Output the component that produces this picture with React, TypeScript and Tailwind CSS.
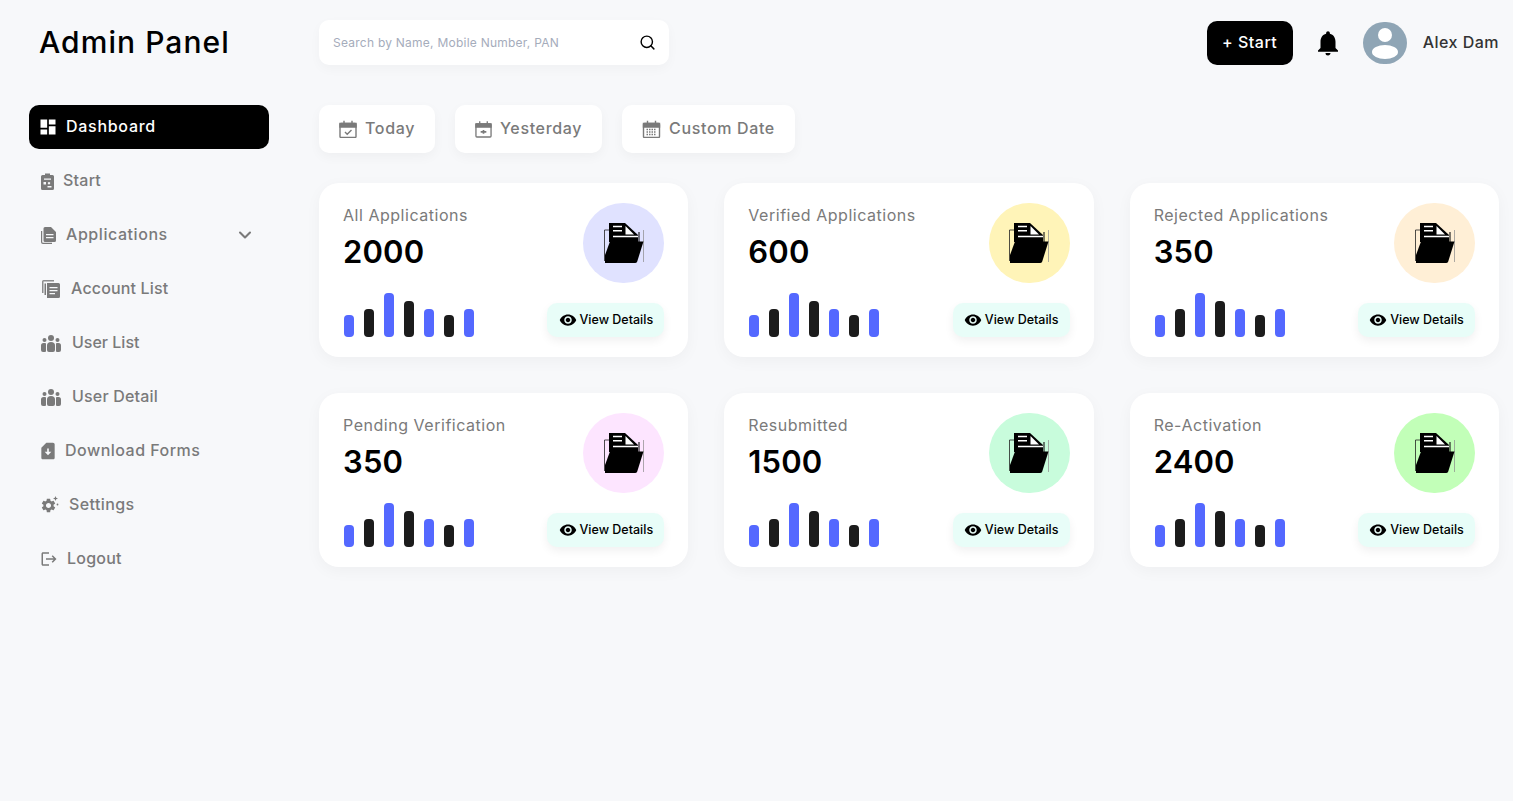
import React from 'react';
import { Search, ChevronDown } from 'lucide-react';
import {
  MdDashboard,
  MdSimCardDownload,
  MdSettings,
  MdLogout,
  MdNotifications,
  MdVisibility,
} from 'react-icons/md';

const font = "font-['Inter','Liberation_Sans',sans-serif]";

const ClipboardIcon = () => (
  <svg width="13" height="18" viewBox="0 0 13 18" fill="#7a7a7a" className="ml-px">
    <path fillRule="evenodd" d="M4 1.500h5V3h2.500A1.500 1.500 0 0 1 13 4.500V16.500A1.500 1.500 0 0 1 11.500 18H1.500A1.500 1.500 0 0 1 0 16.500V4.500A1.500 1.500 0 0 1 1.500 3H4zM3 6.500v1.200h7V6.500zM2.500 10v2.500H5V10zM8 10a1.200 1.200 0 1 0 .01 0zM6.500 14v1.500h4V14z" />
  </svg>
);

const DocIcon = () => (
  <svg width="15" height="17" viewBox="0 0 15 17" fill="#7a7a7a" className="ml-px">
    <path d="M0 4h1.200v11a.8.8 0 0 0 .8.8h9V17H2a2 2 0 0 1-2-2z" />
    <path fillRule="evenodd" d="M4 0h6l5 5v8.500a1.500 1.500 0 0 1-1.500 1.500H4a1.500 1.500 0 0 1-1.500-1.500v-12A1.500 1.500 0 0 1 4 0zM5 7v1.300h7.500V7zM5 10v1.300h7.500V10z" />
  </svg>
);

const ListIcon = () => (
  <svg width="18" height="18" viewBox="0 0 18 18" fill="#7a7a7a" className="ml-[2px]">
    <path d="M0 1.500A1.500 1.500 0 0 1 1.500 0H12v1.500H1.500V13H0z" opacity=".85" />
    <path d="M2.500 3.500H4V15H2.500z" />
    <path fillRule="evenodd" d="M5 3h11.500A1.500 1.500 0 0 1 18 4.500v12a1.500 1.500 0 0 1-1.500 1.500H5zM7.500 7v1.300H15.500V7zM7.500 10v1.300H15.500V10zM7.500 13v1.300H13V13z" />
  </svg>
);

const UsersIcon = () => (
  <svg width="20" height="17" viewBox="0 0 20 17" fill="#7a7a7a" className="ml-px">
    <circle cx="10" cy="3" r="3" />
    <circle cx="3.500" cy="5" r="2" />
    <circle cx="16.500" cy="5" r="2" />
    <path d="M6 10.500a4 3.500 0 0 1 8 0V15a2 2 0 0 1-2 2H8a2 2 0 0 1-2-2z" />
    <path d="M0 10.500A2.500 2.500 0 0 1 2.500 8h1.700Q5 8 5 9v7a1 1 0 0 1-1 1H2a2 2 0 0 1-2-2z" />
    <path d="M20 10.500A2.500 2.500 0 0 0 17.500 8h-1.700Q15 8 15 9v7a1 1 0 0 0 1 1h2a2 2 0 0 0 2-2z" />
  </svg>
);

const SettingsIcon = () => (
  <span className="relative flex h-[18px] w-[19px] items-end">
    <MdSettings size={17} color="#7a7a7a" />
    <svg className="absolute right-0 top-0" width="6" height="12" viewBox="0 0 6 12" fill="#7a7a7a">
      <path d="M2.500 0l.7 1.800L5 2.500l-1.800.7-.7 1.800-.7-1.800L0 2.500l1.800-.7z" />
      <circle cx="4.500" cy="8.500" r=".9" />
    </svg>
  </span>
);

const CalendarFrame = ({ children, width, height }: { children: React.ReactNode; width: number; height: number }) => (
  <svg width={width} height={height} viewBox="0 0 18 18" fill="none" stroke="#7a7a7a" strokeWidth="1.400">
    <path d="M1 4.500a1 1 0 0 1 1-1h14a1 1 0 0 1 1 1v12a1 1 0 0 1-1 1H2a1 1 0 0 1-1-1z" />
    <path d="M1 3.500h16v3.500H1z" fill="#7a7a7a" />
    <path d="M5 .8v3M13 .8v3" />
    {children}
  </svg>
);

const FolderIcon = () => (
  <svg width="40" height="40" viewBox="0 0 40 40">
    {/* back of the folder */}
    <path d="M.5 38V7h5" fill="none" stroke="#222" strokeWidth="0.800" />
    <path d="M35 9v10" stroke="#222" strokeWidth="1.200" />
    <path d="M39.500 7v32" stroke="#8a8a8a" strokeWidth="0.700" />
    {/* sheet */}
    <path d="M5 0h16L34 12v7H5z" fill="#000" />
    <path d="M9 2.700h9v1.500H9zM9 7h9v1.500H9zM9 12.800h25v1.400H9z" fill="#fff" />
    <path d="M21.500 3L30 11.500H21.500z" fill="#fff" />
    {/* front */}
    <path d="M1 40V32L6 18.500H39.500L33.200 38.500Q32.700 40 31 40z" fill="#000" />
  </svg>
);

const navItems: { label: string; icon: React.ReactNode; active?: boolean; chevron?: boolean; iconBox: string; tracking: string }[] = [
  { label: 'Dashboard', icon: <MdDashboard size={20} color="#fff" className="-ml-[2px]" />, active: true, iconBox: 'w-[26px]', tracking: 'tracking-[0.045em]' },
  { label: 'Start', icon: <ClipboardIcon />, iconBox: 'w-[23px]', tracking: 'tracking-[0.015em]' },
  { label: 'Applications', icon: <DocIcon />, chevron: true, iconBox: 'w-[26px]', tracking: 'tracking-[0.035em]' },
  { label: 'Account List', icon: <ListIcon />, iconBox: 'w-[31px]', tracking: 'tracking-[0.01em]' },
  { label: 'User List', icon: <UsersIcon />, iconBox: 'w-[32px]', tracking: 'tracking-normal' },
  { label: 'User Detail', icon: <UsersIcon />, iconBox: 'w-[32px]', tracking: 'tracking-[0.012em]' },
  { label: 'Download Forms', icon: <MdSimCardDownload size={20} color="#7a7a7a" className="-ml-[2px]" />, iconBox: 'w-[25px]', tracking: 'tracking-[0.03em]' },
  { label: 'Settings', icon: <SettingsIcon />, iconBox: 'w-[29px]', tracking: 'tracking-[0.025em]' },
  { label: 'Logout', icon: <MdLogout size={18} color="#7a7a7a" />, iconBox: 'w-[27px]', tracking: 'tracking-[0.015em]' },
];

const cards = [
  { title: 'All Applications', value: '2000', circle: 'bg-[#e0e2ff]' },
  { title: 'Verified Applications', value: '600', circle: 'bg-[#fff4b8]' },
  { title: 'Rejected Applications', value: '350', circle: 'bg-[#ffefd6]' },
  { title: 'Pending Verification', value: '350', circle: 'bg-[#fde5ff]' },
  { title: 'Resubmitted', value: '1500', circle: 'bg-[#c8fcdc]' },
  { title: 'Re-Activation', value: '2400', circle: 'bg-[#c2ffb8]' },
];

const bars = [
  { h: 'h-[22px]', c: 'bg-[#5468ff]' },
  { h: 'h-[28px]', c: 'bg-[#1c1c1c]' },
  { h: 'h-[44px]', c: 'bg-[#5468ff]' },
  { h: 'h-[36px]', c: 'bg-[#1c1c1c]' },
  { h: 'h-[28px]', c: 'bg-[#5468ff]' },
  { h: 'h-[22px]', c: 'bg-[#1c1c1c]' },
  { h: 'h-[28px]', c: 'bg-[#5468ff]' },
];

const dateButtons = [
  {
    label: 'Today',
    width: 'w-[116px]',
    icon: (
      <CalendarFrame width={18} height={18}>
        <path d="M6 12l2.200 2.200L12.500 10" />
      </CalendarFrame>
    ),
  },
  {
    label: 'Yesterday',
    width: 'w-[147px]',
    icon: (
      <CalendarFrame width={17} height={18}>
        <path d="M6 12h6M9 10v4" strokeWidth="1.800" />
      </CalendarFrame>
    ),
  },
  {
    label: 'Custom Date',
    width: 'w-[173px]',
    icon: (
      <CalendarFrame width={19} height={18}>
        <path d="M4 9.500h10M4 12h10M4 14.500h10" strokeDasharray="1.500 1" />
      </CalendarFrame>
    ),
  },
];

const StatCard = ({ title, value, circle }: { title: string; value: string; circle: string }) => (
  <div className="flex h-[174px] flex-col justify-between rounded-[20px] bg-white px-6 pb-5 pt-5 shadow-[0_4px_16px_rgba(0,0,0,0.04)]">
    <div className="flex items-start justify-between">
      <div>
        <p className="mt-[1px] text-base leading-[22px] tracking-[0.033em] text-[#7a7a7a]">{title}</p>
        <p className="mt-[6px] text-[31px] font-semibold leading-[40px] tracking-[0.005em] text-black">{value}</p>
      </div>
      <div className={`flex h-20 w-[81px] items-center justify-center rounded-full ${circle}`}>
        <FolderIcon />
      </div>
    </div>
    <div className="flex items-end justify-between">
      <div className="ml-px flex items-end gap-[10px]">
        {bars.map((bar, i) => (
          <span key={i} className={`w-[10px] rounded-[4px] ${bar.h} ${bar.c}`} />
        ))}
      </div>
      <button className="flex h-[34px] w-[117px] items-center justify-center gap-[3px] rounded-[10px] bg-[#e8fdf8] text-[12.500px] font-medium text-black shadow-[0_4px_10px_rgba(0,0,0,0.06)]">
        <MdVisibility size={18} />
        View Details
      </button>
    </div>
  </div>
);

export default function App() {
  return (
    <div className={`flex min-h-[801px] bg-[#f7f8fa] ${font}`}>
      <aside className="w-[319px] shrink-0 pl-[29px] pr-[50px]">
        <h1 className="ml-[10px] flex h-[85px] items-center text-[30px] font-medium tracking-[0.035em] text-black">Admin Panel</h1>
        <nav className="mt-5 flex flex-col gap-[10px]">
          {navItems.map(item => (
            <div
              key={item.label}
              className={`flex h-11 items-center rounded-[10px] pl-[11px] pr-[14px] ${item.active ? 'bg-black text-white' : 'text-[#7a7a7a]'}`}
            >
              <span className={`flex items-center ${item.iconBox}`}>{item.icon}</span>
              <span className={`pb-[2px] text-base font-medium ${item.tracking}`}>{item.label}</span>
              {item.chevron && <ChevronDown size={20} strokeWidth={2.500} className="ml-auto" />}
            </div>
          ))}
        </nav>
      </aside>

      <main className="min-w-0 flex-1 pr-[14px]">
        <header className="flex h-[85px] items-center">
          <div className="flex h-[45px] w-[350px] items-center justify-between rounded-[10px] bg-white pl-[14px] pr-[13px] shadow-[0_4px_12px_rgba(0,0,0,0.03)]">
            <span className="text-xs tracking-[0.02em] text-[#a5acbb]">Search by Name, Mobile Number, PAN</span>
            <Search size={17} strokeWidth={2} className="text-black" />
          </div>
          <div className="ml-auto flex items-center">
            <button className="h-11 w-[86px] rounded-[10px] bg-black pb-[2px] text-base font-medium tracking-[0.03em] text-white">+ Start</button>
            <MdNotifications size={30} className="ml-5 text-black" />
            <span className="ml-5 flex h-[42px] w-11 items-center justify-center overflow-hidden rounded-full bg-[#8fa5b5]">
              <svg width="44" height="42" viewBox="0 0 44 42" fill="#fff">
                <circle cx="22" cy="13" r="7" />
                <ellipse cx="22" cy="30" rx="13" ry="7" />
              </svg>
            </span>
            <span className="ml-4 pb-[2px] text-base font-medium tracking-[0.03em] text-[#333]">Alex Dam</span>
          </div>
        </header>

        <div className="mt-5 flex gap-5">
          {dateButtons.map(btn => (
            <button
              key={btn.label}
              className={`flex h-12 items-center justify-center gap-2 rounded-[10px] bg-white text-[#7a7a7a] shadow-[0_4px_12px_rgba(0,0,0,0.04)] ${btn.width}`}
            >
              {btn.icon}
              <span className="pb-[2px] text-base font-medium tracking-[0.04em]">{btn.label}</span>
            </button>
          ))}
        </div>

        <div className="mt-[30px] grid grid-cols-3 gap-9">
          {cards.map(card => (
            <StatCard key={card.title} {...card} />
          ))}
        </div>
      </main>
    </div>
  );
}
